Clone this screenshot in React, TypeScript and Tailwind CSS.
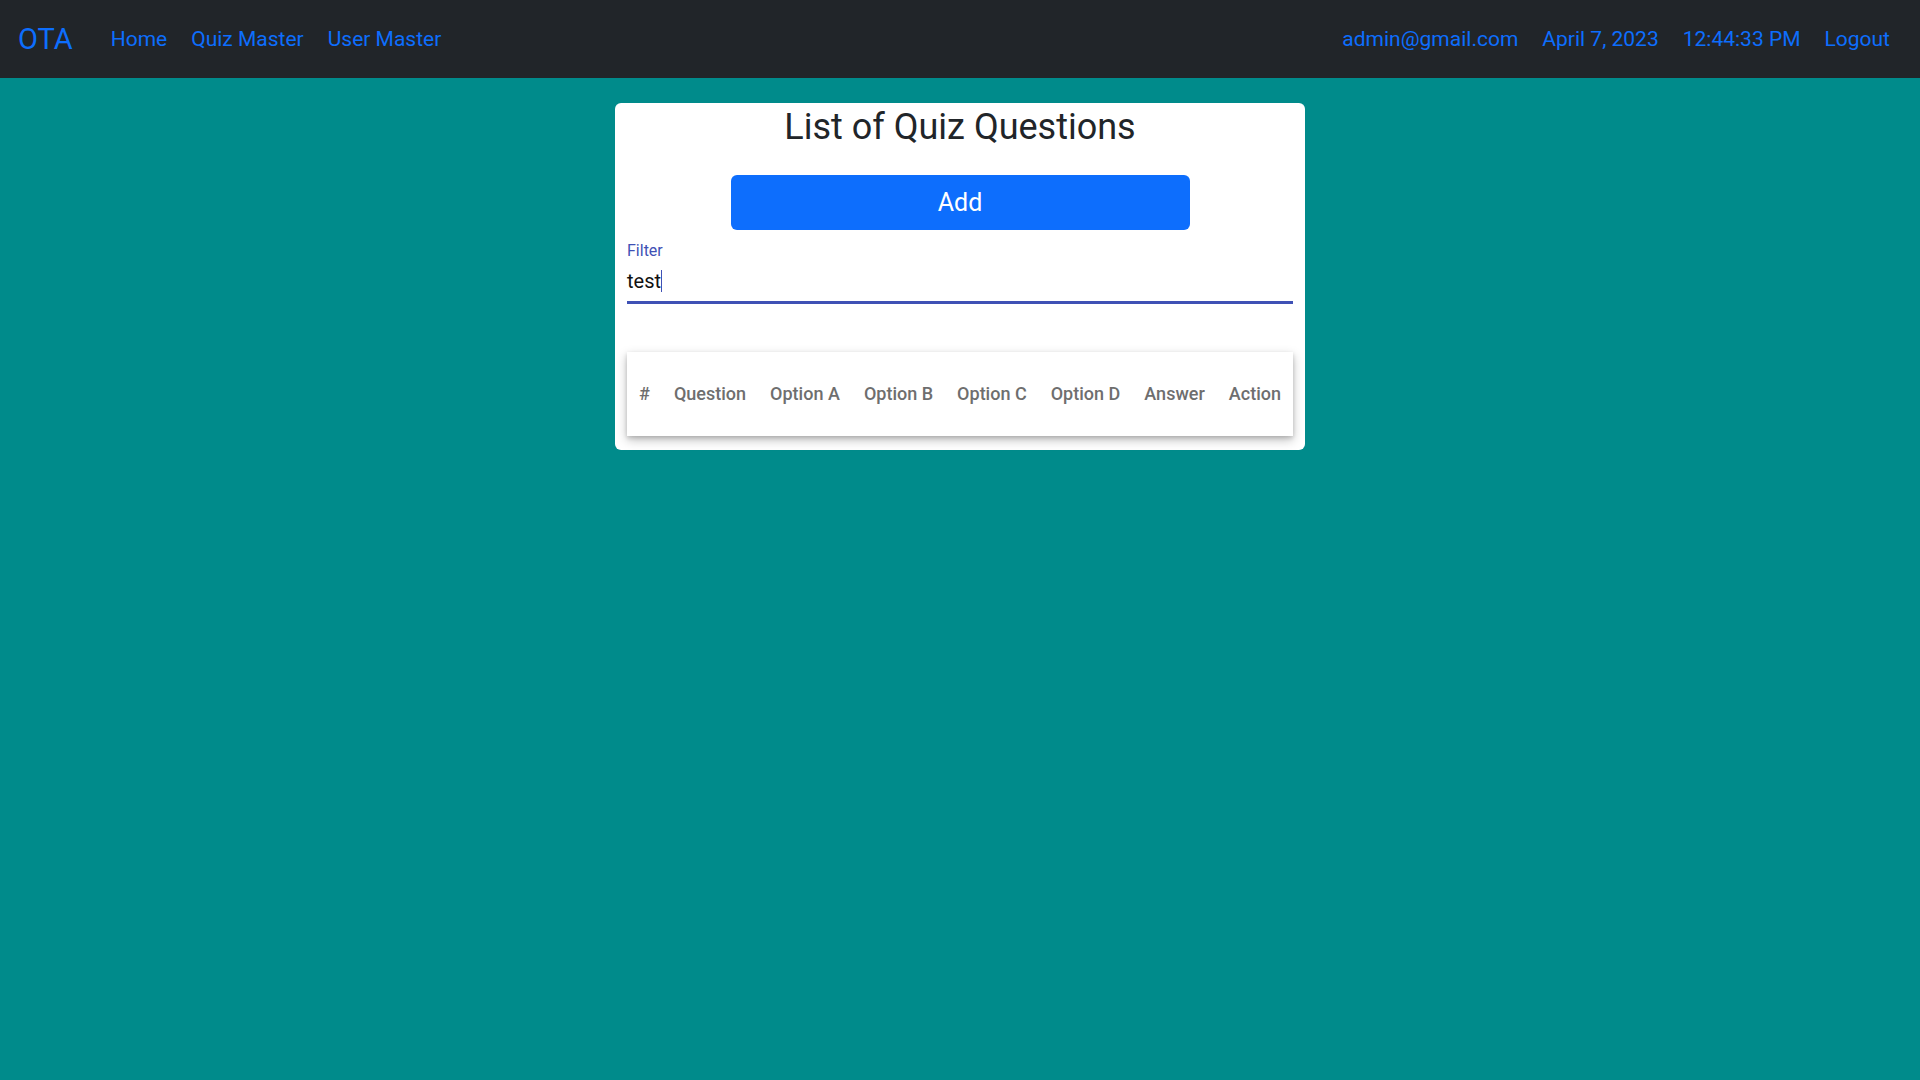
import React from 'react';

const navLinks = ['Home', 'Quiz Master', 'User Master'];
const columns = ['#', 'Question', 'Option A', 'Option B', 'Option C', 'Option D', 'Answer', 'Action'];

const Navbar: React.FC = () => {
  return (
    <nav className="h-[78px] bg-[#212529] flex items-center justify-between pl-[18px] pr-[18px] pt-[2px]">
      <div className="flex items-center">
        <span className="text-[29px] text-[#0d6efd] mr-[26px]">OTA</span>
        {navLinks.map((l) => (
          <a key={l} href="#" className="text-[21px] text-[#0d6efd] px-[12px]">
            {l}
          </a>
        ))}
      </div>
      <div className="flex items-center">
        {['admin@gmail.com', 'April 7, 2023', '12:44:33 PM', 'Logout'].map((t) => (
          <span key={t} className="text-[21px] text-[#0d6efd] px-[12px]">
            {t}
          </span>
        ))}
      </div>
    </nav>
  );
};

const App: React.FC = () => {
  return (
    <div className="min-h-screen bg-[#008b8b] font-['Roboto',sans-serif]">
      <Navbar />
      <div className="w-[690px] mx-auto mt-[25px] bg-white rounded-[6px] px-[12px] pb-[14px]">
        <h2 className="pt-[1px] text-[36px] leading-[46px] text-center text-[#212529]">List of Quiz Questions</h2>
        <button className="block mx-auto mt-[25px] w-[459px] h-[55px] rounded-[6px] bg-[#0d6efd] text-white text-[25px]">
          Add
        </button>
        <div className="mt-[11px]">
          <label className="block text-[16px] leading-[20px] text-[#3f51b5]">Filter</label>
          <div className="h-[43px] flex items-center border-b-[3px] border-[#3f51b5] text-[20px] text-[#111]">
            test<span className="inline-block w-px h-[22px] bg-[#3f51b5]"></span>
          </div>
        </div>
        <div className="mt-[48px] h-[84px] pb-[2px] bg-white shadow-[0_4px_10px_rgba(0,0,0,0.25),0_2px_4px_rgba(0,0,0,0.15)] flex items-center justify-between px-[12px]">
          {columns.map((c) => (
            <span key={c} className="text-[18px] font-medium text-[#6e6e6e]">
              {c}
            </span>
          ))}
        </div>
      </div>
    </div>
  );
};

export default App;
